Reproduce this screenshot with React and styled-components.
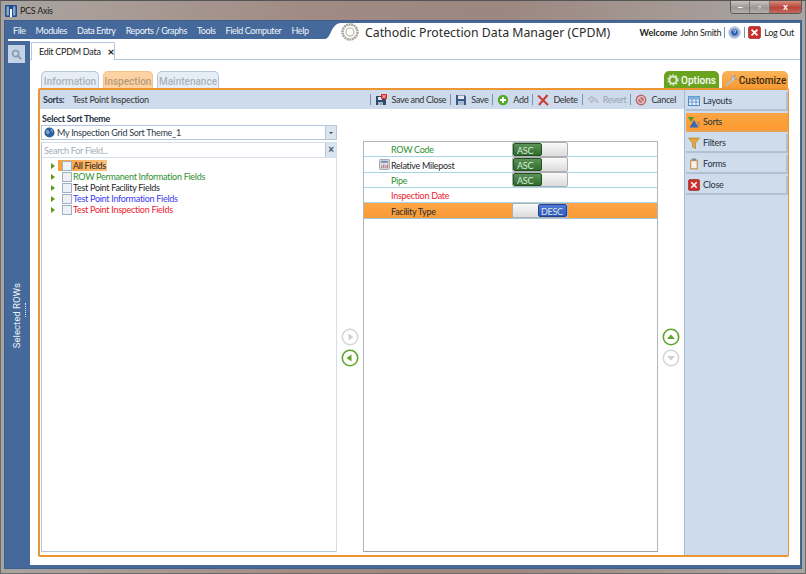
import React from "react";
import styled, { createGlobalStyle } from "styled-components";

const Global = createGlobalStyle`
  html, body { margin: 0; padding: 0; background: #fff; }
  * { box-sizing: border-box; }
  body { font-family: Lato, "Noto Sans", sans-serif; font-size: 9px; letter-spacing: -0.28px; color: #222; }
`;

const Window = styled.div`
  width: 806px;
  height: 574px;
  padding: 0 3px 4px;
  display: flex;
  flex-direction: column;
  overflow: hidden;
  border: 1px solid #6f6a68;
  border-top-color: #555;
  background: linear-gradient(90deg, #a8a4a2 0%, #a99d97 12%, #a08a83 40%, #9c8780 62%, #a59a95 85%, #a8a6a4 100%);
`;

const TitleBar = styled.div`
  height: 19px;
  flex-shrink: 0;
  display: flex;
  align-items: flex-start;
  color: #1d1d1d;
`;

const AppName = styled.span`
  margin: 4px 0 0 3px;
`;

const WinControls = styled.div`
  margin-left: auto;
  width: 72px;
  height: 13px;
  display: flex;
  border: 1px solid #5a5a5a;
  border-top: 0;
  border-radius: 0 0 4px 4px;
  overflow: hidden;
`;

const WinBtn = styled.div`
  flex: ${(p) => (p.$close ? 1.7 : 1)};
  display: flex;
  align-items: center;
  justify-content: center;
  background: ${(p) => (p.$close ? "linear-gradient(#d98a7e, #b8453a 55%, #c46a5e)" : "linear-gradient(#c9c4c2, #9d9693 55%, #b3aeac)")};
  border-right: ${(p) => (p.$close ? "0" : "1px solid #7d7775")};
  color: #fff;
  font: bold 9px "Liberation Sans", sans-serif;
`;

const Client = styled.div`
  flex: 1;
  display: flex;
  flex-direction: column;
  background: #44699a;
  padding-bottom: 3px;
  border: 1px solid #3f5f8a;
  min-height: 0;
`;

const TopBar = styled.div`
  height: 20px;
  display: flex;
  flex-shrink: 0;
  color: #fff;
`;

const MenuBar = styled.nav`
  display: flex;
  width: 320px;
  padding: 0 0 1px 8px;
  gap: 10px;
  align-items: center;
  color: #f1f5fa;
  letter-spacing: -0.38px;
  background: linear-gradient(#44699a 0, #44699a 18px, #fff 18px);
  background-position: 3px 0;
  background-repeat: no-repeat;
`;

const MenuItem = styled.span`
  white-space: nowrap;
`;

const Curve = styled.svg`
  width: 16px;
  height: 20px;
  display: block;
  flex-shrink: 0;
`;

const Header = styled.div`
  flex: 1;
  background: #fff;
  margin-top: 2px;
  margin-right: 1px;
  display: flex;
  align-items: center;
  color: #222;
  padding-right: 6px;
`;

const Title = styled.h1`
  margin: 1px 0 0 6px;
  font-family: "Noto Sans", sans-serif;
  font-size: 12.3px;
  font-weight: 400;
  letter-spacing: 0;
  color: #2b2b2b;
  white-space: nowrap;
`;

const UserBox = styled.div`
  margin: 1px 0 0 auto;
  display: flex;
  align-items: center;
  white-space: nowrap;
`;

const Welcome = styled.strong`
  letter-spacing: 0;
`;

const UserName = styled.span`
  margin-left: 3px;
`;

const LogOut = styled.span`
  margin-left: 3px;
`;

const Divider = styled.span`
  width: 1px;
  height: ${(p) => p.$h || 11}px;
  background: #7d93ad;
  margin: 0 ${(p) => p.$gap ?? 4}px;
  flex-shrink: 0;
`;

const Work = styled.div`
  flex: 1;
  display: flex;
  min-height: 0;
`;

const Side = styled.aside`
  width: 25px;
  flex-shrink: 0;
  display: flex;
  flex-direction: column;
  align-items: flex-start;
`;

const SearchBtn = styled.button`
  width: 17px;
  height: 18px;
  margin: 4px 0 0 3px;
  padding: 0;
  border: 0;
  background: #c4d3e6;
  display: flex;
  align-items: center;
  justify-content: center;
`;

const SideLabelWrap = styled.div`
  flex: 1;
  align-self: stretch;
  display: flex;
  align-items: center;
  justify-content: center;
  padding: 0 0 0 2px;
  gap: 3px;
`;

const SideLabel = styled.span`
  writing-mode: vertical-rl;
  transform: rotate(180deg);
  font-family: Roboto, sans-serif;
  letter-spacing: 0;
  color: #eef3f9;
  font-size: 9.6px;
  white-space: nowrap;
  margin-top: 4px;
`;

const Grip = styled.span`
  width: 1px;
  height: 14px;
  border-left: 1px dotted #dfe8f2;
  margin-bottom: 8px;
`;

const Main = styled.main`
  flex: 1;
  min-width: 0;
  background: #fff;
  display: flex;
  flex-direction: column;
  margin-right: 1px;
`;

const TabStrip = styled.div`
  height: 19px;
  flex-shrink: 0;
  display: flex;
  align-items: flex-end;
  padding-left: 1px;
  border-bottom: 1px solid #b6c6da;
`;

const DocTab = styled.div`
  width: 84px;
  height: 18px;
  display: flex;
  align-items: center;
  padding-left: 7px;
  gap: 7px;
  white-space: nowrap;
  background: #fff;
  border: 1px solid #b6c6da;
  border-bottom: 0;
  margin-bottom: -1px;
  border-top-right-radius: 2px;
`;

const TabClose = styled.span`
  font-weight: 700;
  font-size: 12px;
  line-height: 10px;
`;

const ModuleTabs = styled.div`
  height: 17px;
  margin: 11px 12px 0 11px;
  display: flex;
  gap: 4px;
  flex-shrink: 0;
`;

const ModuleTab = styled.div`
  height: 17px;
  width: ${(p) => p.$w}px;
  padding-top: 4px;
  text-align: center;
  font-family: Roboto, sans-serif;
  letter-spacing: 0;
  font-size: 10px;
  font-weight: 500;
  border-radius: 5px 5px 0 0;
  border: 1px solid ${(p) => (p.$active ? "#f3c38c" : "#b5c7de")};
  border-bottom: 0;
  color: ${(p) => (p.$active ? "#b59a7a" : "#a9b2bd")};
  background: ${(p) => (p.$active ? "#fdd3a3" : "#e6edf5")};
`;

const RightTab = styled.div`
  height: 17px;
  width: ${(p) => p.$w}px;
  padding-top: 1px;
  display: flex;
  align-items: center;
  justify-content: center;
  gap: 2px;
  font-family: Roboto, sans-serif;
  letter-spacing: 0;
  font-size: 10px;
  font-weight: 500;
  border-radius: 5px 5px 0 0;
  color: ${(p) => (p.$green ? "#fff" : "#3a2a12")};
  background: ${(p) => (p.$green ? "#6aa41f" : "linear-gradient(#fbb45a, #f79a33)")};
`;

const RightTabs = styled.div`
  margin-left: auto;
  display: flex;
  gap: 3px;
`;

const Frame = styled.div`
  flex: 1;
  min-height: 0;
  margin: 0 11px 8px 8px;
  display: flex;
  border: 2px solid #ec9532;
  border-right-width: 1px;
  border-radius: 2px;
`;

const Editor = styled.div`
  flex: 1;
  min-width: 0;
  display: flex;
  flex-direction: column;
`;

const SortBar = styled.div`
  height: 19px;
  flex-shrink: 0;
  display: flex;
  align-items: center;
  background: #cddbec;
  padding: 0 8px 0 3px;
  color: #333;
  white-space: nowrap;
`;

const SortLabel = styled.strong`
  font-weight: 700;
  margin-right: 8px;
  color: #2d3b4c;
`;

const Tools = styled.div`
  margin-left: auto;
  display: flex;
  align-items: center;
  letter-spacing: -0.34px;
`;

const Tool = styled.span`
  display: flex;
  align-items: center;
  gap: 4px;
  color: ${(p) => (p.$off ? "#98a3b0" : "#333")};
`;

const Panes = styled.div`
  flex: 1;
  min-height: 0;
  display: flex;
`;

const LeftCol = styled.section`
  width: 296px;
  margin-left: 1px;
  padding-bottom: 3px;
  display: flex;
  flex-direction: column;
  flex-shrink: 0;
`;

const ThemeLabel = styled.div`
  height: 16px;
  padding: 3px 0 0 1px;
  line-height: 13px;
  font-weight: 700;
  color: #26323f;
`;

const Combo = styled.div`
  height: 15px;
  display: flex;
  align-items: center;
  border: 1px solid #b4c6dc;
  padding-left: 2px;
  gap: 2px;
  color: #2f3b47;
`;

const ComboArrow = styled.span`
  margin-left: auto;
  width: 11px;
  height: 100%;
  background: #dbe5f0;
  border-left: 1px solid #b4c6dc;
  display: flex;
  align-items: center;
  justify-content: center;
  &::after {
    content: "";
    border: 2px solid transparent;
    border-top: 2px solid #445;
    margin-top: 2px;
  }
`;

const FieldBox = styled.div`
  flex: 1;
  margin-top: 2px;
  min-height: 0;
  border: 1px solid #b4c6dc;
  border-top-color: #d3deeb;
  border-right-color: #d3deeb;
  display: flex;
  flex-direction: column;
`;

const Search = styled.div`
  height: 15px;
  display: flex;
  align-items: center;
  padding-left: 2px;
  color: #a4acb5;
  border-bottom: 1px solid #d5e0ec;
`;

const SearchClear = styled.span`
  margin-left: auto;
  width: 11px;
  height: 100%;
  background: #dbe5f0;
  border-left: 1px solid #b4c6dc;
  color: #445a72;
  font: bold 10px/13px "Liberation Sans", sans-serif;
  text-align: center;
`;

const Tree = styled.ul`
  list-style: none;
  margin: 0;
  padding: 2px 0 0 9px;
`;

const TreeRow = styled.li`
  height: 11px;
  display: flex;
  align-items: center;
  color: ${(p) => p.$color};
  white-space: nowrap;
`;

const Caret = styled.span`
  width: 0;
  height: 0;
  border: 3px solid transparent;
  border-left: 4px solid #5f9a1d;
  border-right: 0;
  margin-right: 7px;
`;

const Check = styled.span`
  width: 10px;
  height: 10px;
  background: #eef1f4;
  border: 1px solid #9fb0c4;
  margin-right: 1px;
  flex-shrink: 0;
`;

const HotLabel = styled.span`
  display: flex;
  align-items: center;
  height: 11px;
  margin-left: -4px;
  padding: 0 1px 0 4px;
  background: linear-gradient(90deg, #fb9f3d, #fdc27c);
`;

const MoveCol = styled.div`
  width: 26px;
  flex-shrink: 0;
  margin-top: 32px;
  padding-bottom: 2px;
  display: flex;
  flex-direction: column;
  align-items: center;
  justify-content: center;
  gap: 3px;
`;

const SelectedList = styled.ul`
  width: 295px;
  flex-shrink: 0;
  list-style: none;
  margin: 32px 0 3px;
  padding: 0;
  border: 1px solid #b0b6ba;
  border-bottom-color: #9aa5a0;
`;

const SelectedRow = styled.li`
  height: 15.35px;
  display: flex;
  align-items: center;
  border-bottom: 1px solid ${(p) => (p.$hot ? "#a7c7dc" : "#a9d4ea")};
  background: ${(p) => (p.$hot ? "linear-gradient(#fca548, #fb9a36)" : "#fff")};
  color: ${(p) => p.$color};
`;

const RowIcon = styled.span`
  width: 27px;
  display: flex;
  justify-content: flex-end;
  padding-right: 1px;
  flex-shrink: 0;
`;

const RowName = styled.span`
  width: 121px;
  padding-top: 1px;
  flex-shrink: 0;
  white-space: nowrap;
`;

const Toggle = styled.div`
  width: 56px;
  height: 15px;
  display: flex;
  border: 1px solid #aab0b4;
  border-radius: 2px;
  overflow: hidden;
  background: linear-gradient(#f9f9f9, #dcdcdc);
  justify-content: ${(p) => (p.$desc ? "flex-end" : "flex-start")};
`;

const ToggleFace = styled.span`
  width: 29px;
  height: 100%;
  padding-left: ${(p) => (p.$desc ? 2 : 3)}px;
  line-height: 13px;
  color: #dfeadf;
  background: ${(p) => (p.$desc ? "linear-gradient(#5379d6, #2f57bd)" : "linear-gradient(#5c9258, #2f6d2d)")};
  border: 1px solid ${(p) => (p.$desc ? "#22418a" : "#24501f")};
  border-radius: 2px;
`;

const Nav = styled.nav`
  width: 104px;
  flex-shrink: 0;
  background: #cddbec;
  border-left: 1px solid #a5bbd4;
  padding: 2px 0 0 1px;
  display: flex;
  flex-direction: column;
  gap: 2px;
`;

const NavBtn = styled.div`
  height: 19px;
  width: 102px;
  display: flex;
  align-items: center;
  gap: 3px;
  padding-left: 2px;
  color: #26323f;
  background: ${(p) => (p.$active ? "linear-gradient(#fba544, #fd9b30)" : "#cedcec")};
  border-right: 2px solid ${(p) => (p.$active ? "#fb9f3c" : "#b1c0d2")};
  border-bottom: 2px solid ${(p) => (p.$active ? "#e8a259" : "#b1c0d2")};
`;

const Icon = styled.svg`
  display: block;
  flex-shrink: 0;
`;

const LogoIcon = styled(Icon)`
  margin: 4px 0 0 1px;
`;

const Svg = ({ s = 12, children }) => (
  <Icon width={s} height={s} viewBox="0 0 12 12">
    {children}
  </Icon>
);

const AppLogo = () => (
  <LogoIcon width="12" height="12" viewBox="0 0 12 12">
    <rect width="12" height="12" rx="1" fill="#1e4f92" />
    <rect x="1.5" y="1.5" width="2.4" height="9" fill="#8fa9cc" />
    <rect x="5" y="4" width="2" height="8" fill="#fff" />
    <rect x="8" y="1.5" width="2.4" height="9" fill="#8fa9cc" />
  </LogoIcon>
);

const SaveClose = () => (
  <Svg>
    <path d="M1 2h8l2 2v7H1z" fill="#2f4a6d" />
    <rect x="3" y="3" width="4" height="3" fill="#dfe7f1" />
    <rect x="3" y="8" width="5" height="3" fill="#9fb2c8" />
    <rect x="6" y="0" width="6" height="5" fill="#d6322c" />
    <path d="M7.5 1l3 3M10.5 1l-3 3" stroke="#fff" strokeWidth=".8" />
  </Svg>
);

const SaveIcon = () => (
  <Svg>
    <path d="M1 1h8.5L11 2.5V11H1z" fill="#3b5a80" />
    <rect x="3" y="1.5" width="6" height="3.5" fill="#e2e9f2" />
    <rect x="3" y="7" width="6" height="4" fill="#a9bbd0" />
  </Svg>
);

const AddIcon = () => (
  <Svg>
    <circle cx="6" cy="6" r="5.2" fill="#55a82a" />
    <path d="M6 3v6M3 6h6" stroke="#fff" strokeWidth="1.8" />
  </Svg>
);

const DeleteIcon = () => (
  <Svg>
    <path d="M1 1.5l10 9.5M10.5 1L2 11" stroke="#cf3a35" strokeWidth="2" fill="none" />
  </Svg>
);

const RevertIcon = () => (
  <Svg>
    <path d="M1 5l4-3v2c3 0 5 1 6 5-1.5-2-3-2.5-6-2.5V9z" fill="#c9cfd6" stroke="#9aa3ad" strokeWidth=".6" />
  </Svg>
);

const CancelIcon = () => (
  <Svg>
    <circle cx="6" cy="6" r="5.4" fill="#b7686a" />
    <circle cx="6" cy="6" r="3.4" fill="none" stroke="#e6c9c9" strokeWidth="1.2" />
    <path d="M3.6 3.6l4.8 4.8" stroke="#e6c9c9" strokeWidth="1.2" />
  </Svg>
);

const GridIcon = () => (
  <Svg>
    <rect x=".5" y="1.5" width="11" height="9" fill="#e6f0fa" stroke="#4f86c6" />
    <path d="M.5 4h11M4 1.5v9M8 1.5v9M.5 7h11" stroke="#4f86c6" strokeWidth=".8" />
    <rect x=".5" y="1.5" width="11" height="2.4" fill="#7fb0e0" />
  </Svg>
);

const SortIcon = () => (
  <Svg>
    <path d="M0 1h6L3 6z" fill="#4a9a32" />
    <path d="M6 4l4.5 7.5h-9z" fill="#3569b5" />
    <path d="M9 6h3v1.2H9zM9 8.5h3v1.2H9z" fill="#888" />
  </Svg>
);

const FilterIcon = () => (
  <Svg>
    <path d="M.5 1h11L7.5 6v5.5L4.5 10V6z" fill="#e7a63a" stroke="#a77a28" strokeWidth=".6" />
  </Svg>
);

const FormIcon = () => (
  <Svg>
    <rect x="2" y="1.5" width="8" height="10" rx=".6" fill="#c99a5b" />
    <rect x="3.3" y="3.2" width="5.4" height="7" fill="#f4f1ea" />
    <rect x="4" y=".5" width="4" height="2" fill="#7d8a99" />
  </Svg>
);

const CloseIcon = ({ s = 12 }) => (
  <Svg s={s}>
    <rect x=".5" y=".5" width="11" height="11" rx="1.5" fill="#cf2f2c" stroke="#8d1d1b" strokeWidth=".6" />
    <path d="M3.3 3.3l5.4 5.4M8.7 3.3L3.3 8.7" stroke="#fff" strokeWidth="1.6" />
  </Svg>
);

const HelpIcon = () => (
  <Svg s={13}>
    <circle cx="6" cy="6" r="5.4" fill="#9fb6da" stroke="#c3cede" strokeWidth=".8" />
    <circle cx="6" cy="6" r="3" fill="#2f62b4" />
    <path d="M5 5c0-1.3 2-1.3 2 0 0 .8-1 .8-1 1.6" stroke="#fff" strokeWidth=".8" fill="none" />
  </Svg>
);

const GlobeIcon = () => (
  <Svg s={11}>
    <circle cx="6" cy="6" r="5.5" fill="#2e5f9c" />
    <path d="M2 4c2-2 3 0 4 1s-1 3-2 3-2-2-2-4zM7 2c2 0 3 2 3 4-1 0-3-2-3-4z" fill="#7fa8d0" />
  </Svg>
);

const CalcIcon = () => (
  <Svg s={11}>
    <rect x=".5" y=".5" width="11" height="11" rx="1" fill="#d6dbe6" stroke="#8891a3" strokeWidth=".8" />
    <rect x="2" y="2" width="8" height="2" fill="#7b87a0" />
    <path d="M3 10V7M5.2 10V6M7.4 10V7M9.4 10V6" stroke="#b5616b" strokeWidth="1" />
  </Svg>
);

const Magnifier = () => (
  <Svg s={11}>
    <circle cx="5" cy="5" r="3.4" fill="none" stroke="#8397ad" strokeWidth="1.6" />
    <path d="M7.5 7.5L11 11" stroke="#8397ad" strokeWidth="2" />
  </Svg>
);

const GearIcon = () => (
  <Svg>
    <circle cx="6" cy="6" r="3.6" fill="none" stroke="#dfe8d0" strokeWidth="2" />
    <circle cx="6" cy="6" r="5" fill="none" stroke="#dfe8d0" strokeWidth="1.4" strokeDasharray="1.6 1.6" />
  </Svg>
);

const WrenchIcon = () => (
  <Svg s={13}>
    <path d="M1.5 11L7 5.5C6.5 3.5 8 1 10.8 1.5L9 3.3l.8 1.5 1.7.4L12 3.5" fill="#cfd3d8" stroke="#8a8f96" strokeWidth=".7" />
    <path d="M1.5 11L7 5.5" stroke="#b5b9bf" strokeWidth="1.8" />
  </Svg>
);

const LogoRing = () => (
  <Icon width="18" height="18" viewBox="0 0 18 18">
    <circle cx="9" cy="9" r="7.5" fill="none" stroke="#a9a79b" strokeWidth="2.5" strokeDasharray="2 .6" />
    <circle cx="9" cy="9" r="4" fill="none" stroke="#c9c8be" strokeWidth="1.6" />
  </Icon>
);

const MoveBtn = ({ dir, on }) => {
  const c = on ? "#5fa52a" : "#d6d6d6";
  const f = on ? "#5fa52a" : "#d0d0d0";
  const tri = {
    left: "M10.5 5.5v7L5.5 9z",
    right: "M7.5 5.5v7l5-3.5z",
    up: "M5 11h8L9 6.5z",
    down: "M5 7h8l-4 4.5z",
  }[dir];
  return (
    <Icon width="18" height="18" viewBox="0 0 18 18">
      <circle cx="9" cy="9" r="7.7" fill="#fff" stroke={c} strokeWidth="1.6" />
      <path d={tri} fill={f} />
    </Icon>
  );
};

const menu = ["File", "Modules", "Data Entry", "Reports / Graphs", "Tools", "Field Computer", "Help"];

const tree = [
  { name: "All Fields", color: "#1f1f1f", hot: true },
  { name: "ROW Permanent Information Fields", color: "#2f8f2f" },
  { name: "Test Point Facility Fields", color: "#1f1f1f" },
  { name: "Test Point Information Fields", color: "#3a3af0" },
  { name: "Test Point Inspection Fields", color: "#ee1c30" },
];

const selected = [
  { name: "ROW Code", color: "#2f8f2f", order: "ASC" },
  { name: "Relative Milepost", color: "#1f1f1f", order: "ASC", calc: true },
  { name: "Pipe", color: "#2f8f2f", order: "ASC" },
  { name: "Inspection Date", color: "#ee1c30" },
  { name: "Facility Type", color: "#2a2a2a", order: "DESC", hot: true },
];

export default function App() {
  return (
    <>
      <Global />
      <Window>
        <TitleBar>
          <AppLogo />
          <AppName>PCS Axis</AppName>
          <WinControls>
            <WinBtn>–</WinBtn>
            <WinBtn>▫</WinBtn>
            <WinBtn $close>x</WinBtn>
          </WinControls>
        </TitleBar>
        <Client>
          <TopBar>
            <MenuBar>
              {menu.map((m) => (
                <MenuItem key={m}>{m}</MenuItem>
              ))}
            </MenuBar>
            <Curve viewBox="0 0 16 20">
              <path d="M0 20V18C6 18 6 2 16 2V0H0z" fill="#44699a" />
              <path d="M0 20V18C6 18 6 2 16 2V20z" fill="#fff" />
            </Curve>
            <Header>
              <LogoRing />
              <Title>Cathodic Protection Data Manager (CPDM)</Title>
              <UserBox>
                <Welcome>Welcome</Welcome>
                <UserName>John Smith</UserName>
                <Divider $gap={3} />
                <HelpIcon />
                <Divider $gap={3} />
                <CloseIcon s={13} />
                <LogOut>Log Out</LogOut>
              </UserBox>
            </Header>
          </TopBar>
          <Work>
            <Side>
              <SearchBtn>
                <Magnifier />
              </SearchBtn>
              <SideLabelWrap>
                <SideLabel>Selected ROWs</SideLabel>
                <Grip />
              </SideLabelWrap>
            </Side>
            <Main>
              <TabStrip>
                <DocTab>
                  Edit CPDM Data
                  <TabClose>×</TabClose>
                </DocTab>
              </TabStrip>
              <ModuleTabs>
                <ModuleTab $w={58}>Information</ModuleTab>
                <ModuleTab $w={50} $active>
                  Inspection
                </ModuleTab>
                <ModuleTab $w={62}>Maintenance</ModuleTab>
                <RightTabs>
                  <RightTab $w={55} $green>
                    <GearIcon />
                    Options
                  </RightTab>
                  <RightTab $w={66}>
                    <WrenchIcon />
                    Customize
                  </RightTab>
                </RightTabs>
              </ModuleTabs>
              <Frame>
                <Editor>
                  <SortBar>
                    <SortLabel>Sorts:</SortLabel>
                    Test Point Inspection
                    <Tools>
                      <Divider />
                      <Tool>
                        <SaveClose />
                        Save and Close
                      </Tool>
                      <Divider />
                      <Tool>
                        <SaveIcon />
                        Save
                      </Tool>
                      <Divider />
                      <Tool>
                        <AddIcon />
                        Add
                      </Tool>
                      <Divider />
                      <Tool>
                        <DeleteIcon />
                        Delete
                      </Tool>
                      <Divider />
                      <Tool $off>
                        <RevertIcon />
                        Revert
                      </Tool>
                      <Divider />
                      <Tool>
                        <CancelIcon />
                        Cancel
                      </Tool>
                    </Tools>
                  </SortBar>
                  <Panes>
                    <LeftCol>
                      <ThemeLabel>Select Sort Theme</ThemeLabel>
                      <Combo>
                        <GlobeIcon />
                        My Inspection Grid Sort Theme_1
                        <ComboArrow />
                      </Combo>
                      <FieldBox>
                        <Search>
                          Search For Field...
                          <SearchClear>×</SearchClear>
                        </Search>
                        <Tree>
                          {tree.map((t) => (
                            <TreeRow key={t.name} $color={t.color}>
                              <Caret />
                              {t.hot ? (
                                <HotLabel>
                                  <Check />
                                  {t.name}
                                </HotLabel>
                              ) : (
                                <>
                                  <Check />
                                  {t.name}
                                </>
                              )}
                            </TreeRow>
                          ))}
                        </Tree>
                      </FieldBox>
                    </LeftCol>
                    <MoveCol>
                      <MoveBtn dir="right" />
                      <MoveBtn dir="left" on />
                    </MoveCol>
                    <SelectedList>
                      {selected.map((r) => (
                        <SelectedRow key={r.name} $color={r.color} $hot={r.hot}>
                          <RowIcon>{r.calc && <CalcIcon />}</RowIcon>
                          <RowName>{r.name}</RowName>
                          {r.order && (
                            <Toggle $desc={r.order === "DESC"}>
                              <ToggleFace $desc={r.order === "DESC"}>{r.order}</ToggleFace>
                            </Toggle>
                          )}
                        </SelectedRow>
                      ))}
                    </SelectedList>
                    <MoveCol>
                      <MoveBtn dir="up" on />
                      <MoveBtn dir="down" />
                    </MoveCol>
                  </Panes>
                </Editor>
                <Nav>
                  <NavBtn>
                    <GridIcon />
                    Layouts
                  </NavBtn>
                  <NavBtn $active>
                    <SortIcon />
                    Sorts
                  </NavBtn>
                  <NavBtn>
                    <FilterIcon />
                    Filters
                  </NavBtn>
                  <NavBtn>
                    <FormIcon />
                    Forms
                  </NavBtn>
                  <NavBtn>
                    <CloseIcon />
                    Close
                  </NavBtn>
                </Nav>
              </Frame>
            </Main>
          </Work>
        </Client>
      </Window>
    </>
  );
}
